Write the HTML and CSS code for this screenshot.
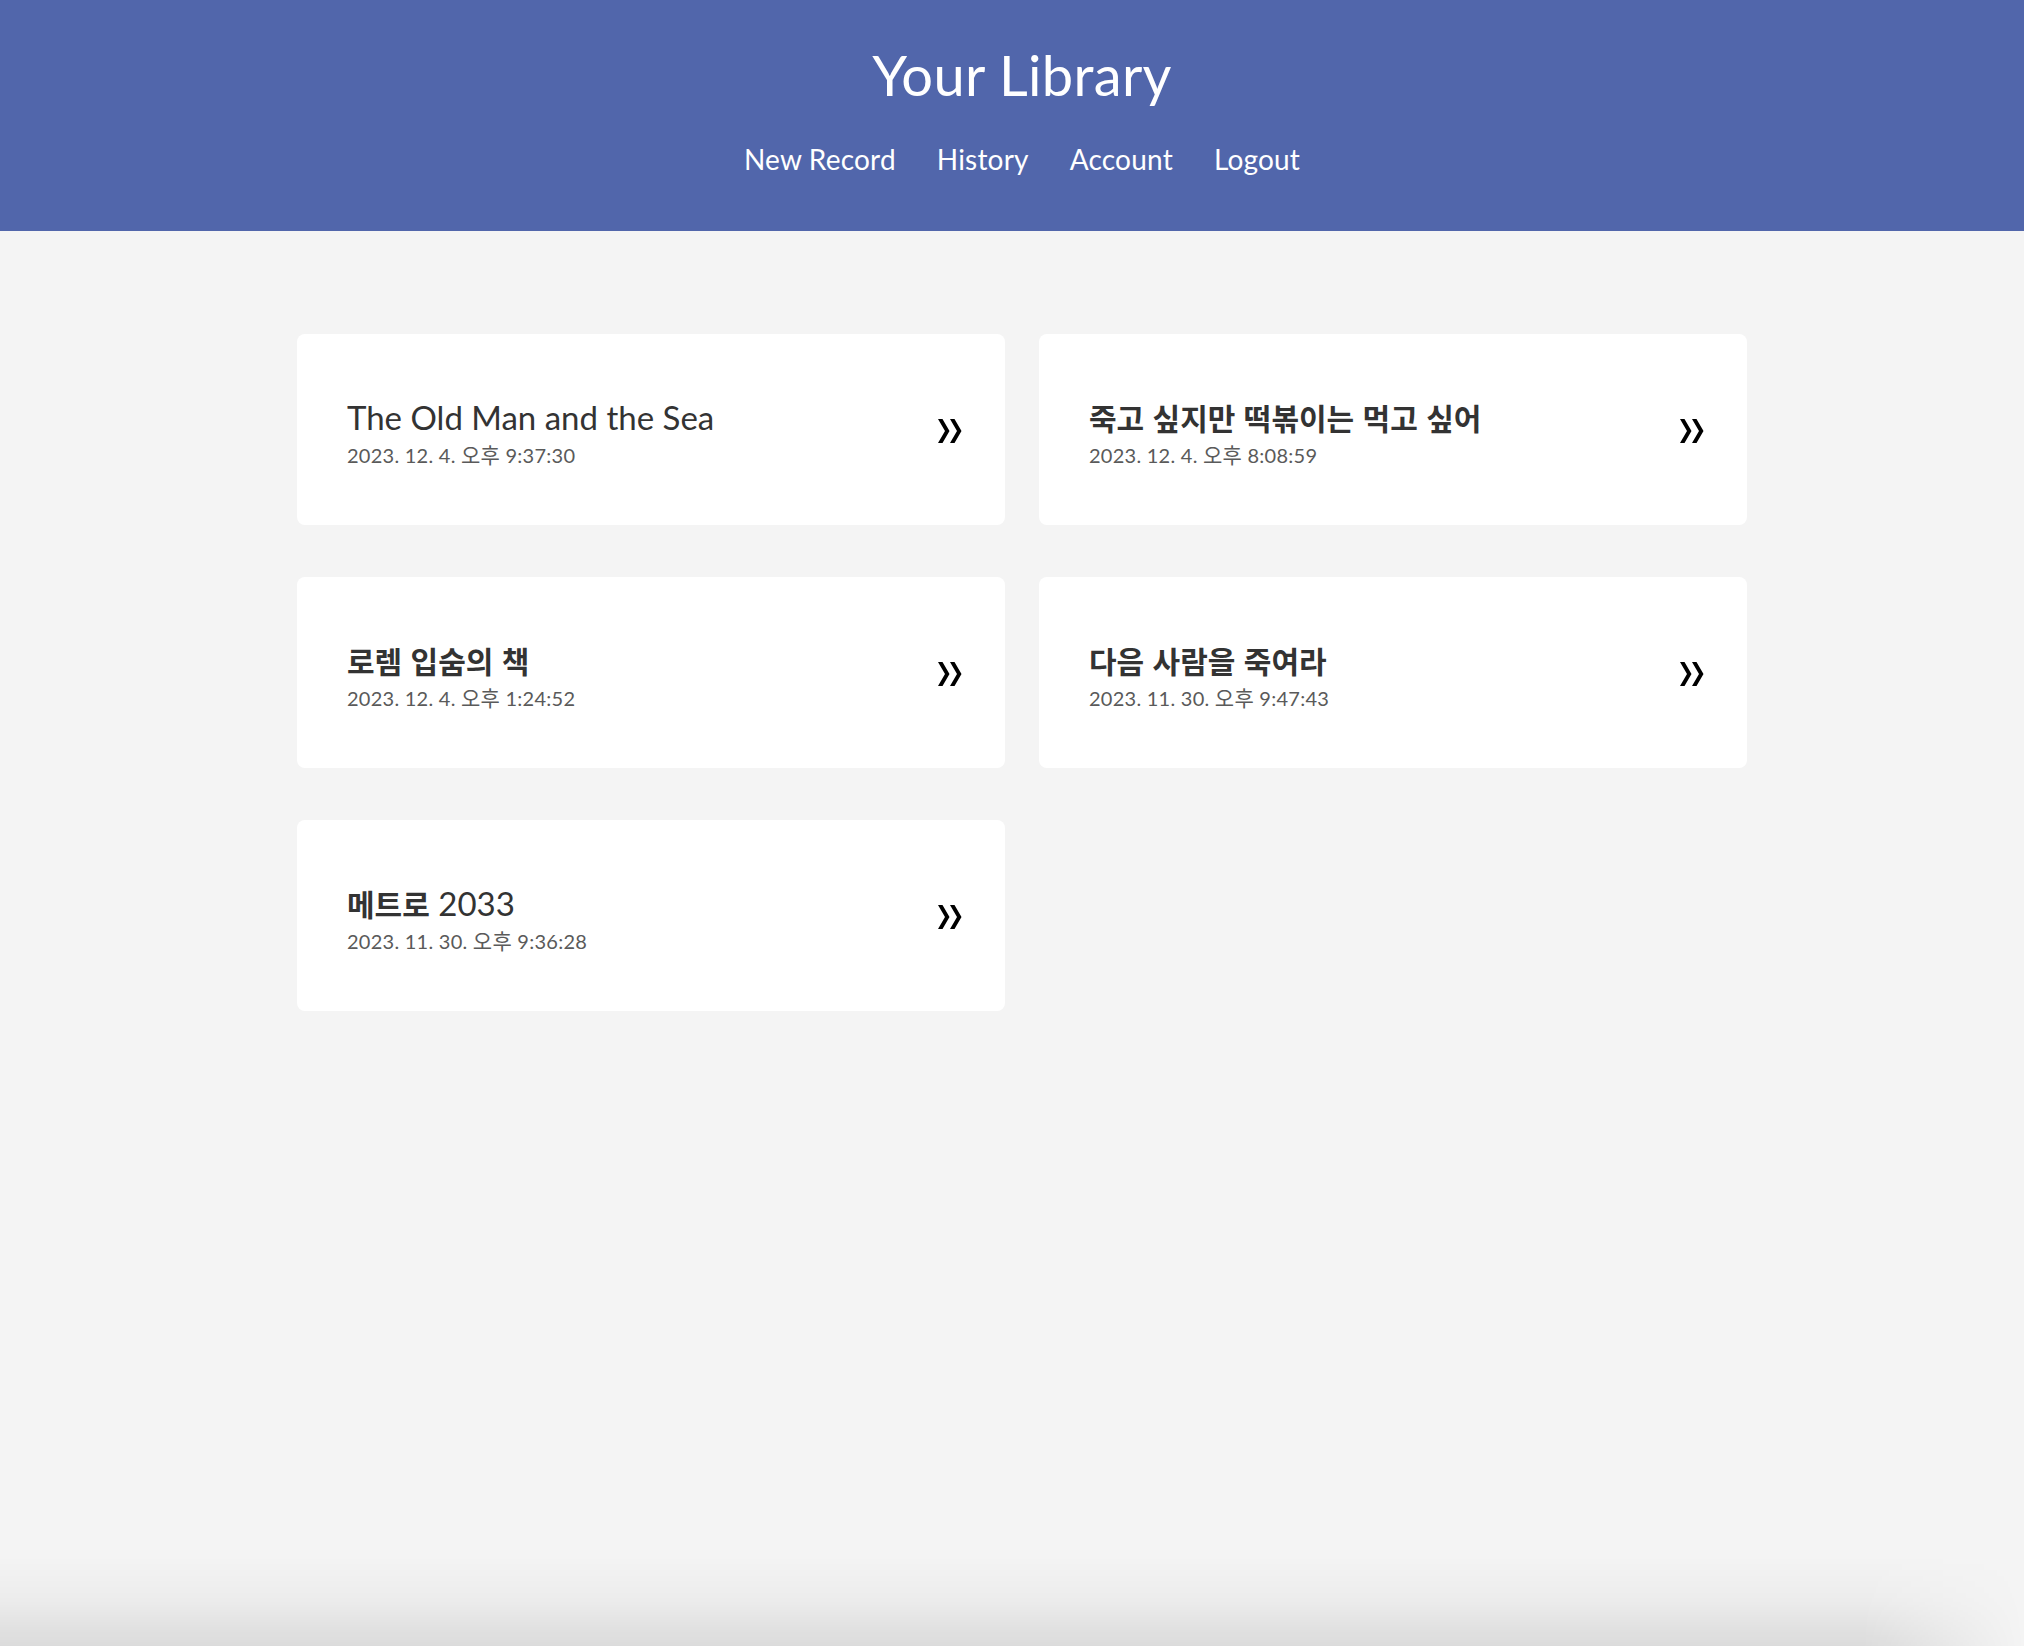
FILE: index.html
```html
<!DOCTYPE html>
<html lang="ko">
<head>
<meta charset="utf-8">
<title>Your Library</title>
<link rel="stylesheet" href="styles.css">
</head>
<body>
<header class="top">
  <h1 class="brand">Your Library</h1>
  <nav class="nav">
    <a href="#">New Record</a>
    <a href="#">History</a>
    <a href="#">Account</a>
    <a href="#">Logout</a>
  </nav>
</header>
<main class="main">
  <div class="grid">
    <a class="card" href="#">
      <div class="info">
        <div class="title">The Old Man and the Sea</div>
        <div class="date">2023. 12. 4. <span class="ko-light">오후</span> 9:37:30</div>
      </div>
      <svg class="chev" viewBox="0 0 24 24" width="24" height="24"><polygon points="0,0 4.5,0 11.5,12 4.5,24 0,24 7,12"/><polygon points="12,0 16.5,0 23.5,12 16.5,24 12,24 19,12"/></svg>
    </a>
    <a class="card" href="#">
      <div class="info">
        <div class="title"><span class="ko">죽고 싶지만 떡볶이는 먹고 싶어</span></div>
        <div class="date">2023. 12. 4. <span class="ko-light">오후</span> 8:08:59</div>
      </div>
      <svg class="chev" viewBox="0 0 24 24" width="24" height="24"><polygon points="0,0 4.5,0 11.5,12 4.5,24 0,24 7,12"/><polygon points="12,0 16.5,0 23.5,12 16.5,24 12,24 19,12"/></svg>
    </a>
    <a class="card" href="#">
      <div class="info">
        <div class="title"><span class="ko">로렘 입숨의 책</span></div>
        <div class="date">2023. 12. 4. <span class="ko-light">오후</span> 1:24:52</div>
      </div>
      <svg class="chev" viewBox="0 0 24 24" width="24" height="24"><polygon points="0,0 4.5,0 11.5,12 4.5,24 0,24 7,12"/><polygon points="12,0 16.5,0 23.5,12 16.5,24 12,24 19,12"/></svg>
    </a>
    <a class="card" href="#">
      <div class="info">
        <div class="title"><span class="ko">다음 사람을 죽여라</span></div>
        <div class="date">2023. 11. 30. <span class="ko-light">오후</span> 9:47:43</div>
      </div>
      <svg class="chev" viewBox="0 0 24 24" width="24" height="24"><polygon points="0,0 4.5,0 11.5,12 4.5,24 0,24 7,12"/><polygon points="12,0 16.5,0 23.5,12 16.5,24 12,24 19,12"/></svg>
    </a>
    <a class="card" href="#">
      <div class="info">
        <div class="title"><span class="ko">메트로</span> 2033</div>
        <div class="date">2023. 11. 30. <span class="ko-light">오후</span> 9:36:28</div>
      </div>
      <svg class="chev" viewBox="0 0 24 24" width="24" height="24"><polygon points="0,0 4.5,0 11.5,12 4.5,24 0,24 7,12"/><polygon points="12,0 16.5,0 23.5,12 16.5,24 12,24 19,12"/></svg>
    </a>
  </div>
</main>
<div class="bottom-shade"></div>
</body>
</html>
```
FILE: styles.css
```css
html, body {
  margin: 0;
  padding: 0;
}
body {
  background: #f4f4f4;
  font-family: "Lato", "Noto Sans CJK KR", sans-serif;
  color: #333;
  min-height: 1646px;
}
.top {
  background: #5166ab;
  height: 231px;
  box-sizing: border-box;
  padding: 40px 0 0 20px;
  text-align: center;
  color: #fff;
}
.brand {
  margin: 0;
  font-size: 56px;
  font-weight: 400;
  line-height: 70px;
  letter-spacing: 0.3px;
}
.nav {
  display: flex;
  justify-content: center;
  gap: 41px;
  margin-top: 32px;
}
.nav a {
  color: #fff;
  text-decoration: none;
  font-size: 28px;
  line-height: 34px;
  letter-spacing: 0.2px;
}
.main {
  padding: 103px 0 0 297px;
}
.grid {
  display: grid;
  grid-template-columns: 708px 708px;
  column-gap: 34px;
  row-gap: 52px;
}
.card {
  background: #fff;
  border-radius: 8px;
  height: 191px;
  box-sizing: border-box;
  padding: 6px 43px 0 50px;
  display: flex;
  align-items: center;
  justify-content: space-between;
  text-decoration: none;
  color: #333;
}
.title {
  font-size: 33px;
  line-height: 40px;
  color: #333;
}
.ko {
  font-family: "Noto Sans CJK KR", sans-serif;
  font-weight: 700;
  font-size: 30px;
}
.date {
  font-size: 20px;
  line-height: 28px;
  color: #5a5a5a;
  margin-top: 3px;
  letter-spacing: 0.25px;
}
.ko-light {
  font-family: "Noto Sans CJK KR", sans-serif;
  font-size: 21px;
}
.chev {
  display: block;
  fill: #000;
  flex: none;
  margin-bottom: 4px;
}
.bottom-shade {
  position: fixed;
  left: 0;
  right: 0;
  bottom: 0;
  height: 90px;
  background: linear-gradient(to bottom, rgba(0,0,0,0) 0%, rgba(0,0,0,0.03) 50%, rgba(0,0,0,0.1) 100%);
  -webkit-mask-image: linear-gradient(to right, #000 0%, #000 92%, rgba(0,0,0,0) 100%);
  mask-image: linear-gradient(to right, #000 0%, #000 92%, rgba(0,0,0,0) 100%);
  pointer-events: none;
}
```
